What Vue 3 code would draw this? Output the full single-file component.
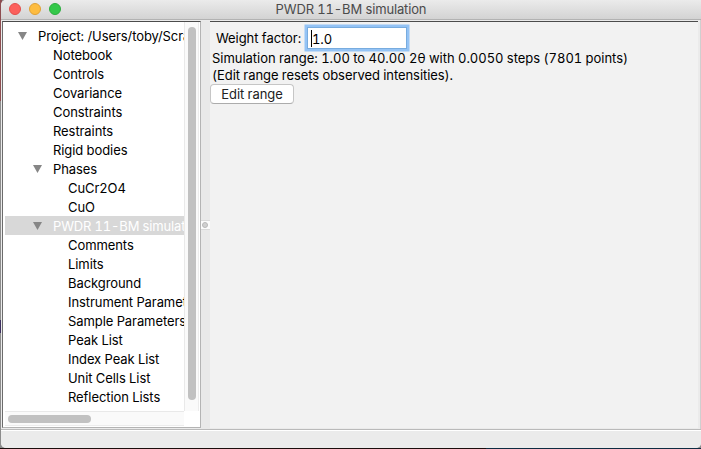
<script setup>
const rows = [
  { label: 'Project: /Users/toby/Scratch', level: 0, open: true },
  { label: 'Notebook', level: 1 },
  { label: 'Controls', level: 1 },
  { label: 'Covariance', level: 1 },
  { label: 'Constraints', level: 1 },
  { label: 'Restraints', level: 1 },
  { label: 'Rigid bodies', level: 1 },
  { label: 'Phases', level: 1, open: true },
  { label: 'CuCr2O4', level: 2 },
  { label: 'CuO', level: 2 },
  { label: 'PWDR 11-BM simulation', level: 1, open: true, selected: true },
  { label: 'Comments', level: 2 },
  { label: 'Limits', level: 2 },
  { label: 'Background', level: 2 },
  { label: 'Instrument Parameters', level: 2 },
  { label: 'Sample Parameters', level: 2 },
  { label: 'Peak List', level: 2 },
  { label: 'Index Peak List', level: 2 },
  { label: 'Unit Cells List', level: 2 },
  { label: 'Reflection Lists', level: 2 },
]
</script>

<template>
  <div class="desktop">
    <div class="window">
      <header class="titlebar">
        <div class="lights">
          <span class="light close"></span>
          <span class="light minimize"></span>
          <span class="light maximize"></span>
        </div>
        <span class="title">PWDR 11-BM simulation</span>
      </header>
      <div class="body">
        <aside class="sidebar">
          <div class="tree">
            <div
              v-for="row in rows"
              :key="row.label"
              class="row"
              :class="['level-' + row.level, { selected: row.selected }]"
            >
              <span class="toggle">
                <svg v-if="row.open" width="9" height="8" viewBox="0 0 9 8"><path d="M0 0H9L4.5 8Z" fill="#868686" /></svg>
              </span>
              <span class="label">{{ row.label }}</span>
            </div>
          </div>
          <div class="vbar"><div class="vthumb"></div></div>
          <div class="hbar"><div class="hthumb"></div></div>
          <div class="corner"></div>
        </aside>
        <div class="sash"><span class="grip"><i class="dot"></i></span></div>
        <main class="panel">
          <div class="field">
            <span class="field-label">Weight factor:</span>
            <div class="input"><span class="caret"></span><span class="value">1.0</span></div>
          </div>
          <p class="line range">Simulation range: 1.00 to 40.00 2θ with 0.0050 steps (7801 points)</p>
          <p class="line note">(Edit range resets observed intensities).</p>
          <button class="button" type="button">Edit range</button>
        </main>
      </div>
      <footer class="status"></footer>
    </div>
  </div>
</template>

<style>
body { margin: 0; overflow: hidden; }
</style>

<style scoped>
* { box-sizing: border-box; }
.desktop {
  width: 701px;
  height: 449px;
  padding: 0 0 1px 1px;
  background:
    linear-gradient(#8d4d50, #8d4d50) 0 0 / 2px 101px no-repeat,
    linear-gradient(#3d3060, #3d3060) 0 320px / 2px 13px no-repeat,
    linear-gradient(90deg, #1b0d0c 486px, #0d2b41 486px) 0 448px / 701px 1px no-repeat,
    #8c8c8c;
  font-family: Inter, "Liberation Sans", sans-serif;
  font-size: 13px;
  font-variant-numeric: tabular-nums;
  color: #000;
}
.window {
  display: flex;
  flex-direction: column;
  width: 700px;
  height: 448px;
  overflow: hidden;
  border-radius: 5px 0 5px 5px;
  background: #ebebeb;
}
.titlebar {
  display: grid;
  grid-template-columns: 1fr auto 1fr;
  flex: none;
  height: 20px;
  border-bottom: 1px solid #b2b2b2;
  background: linear-gradient(#ebebeb, #d3d3d3);
}
.lights { display: flex; gap: 8px; padding: 3px 0 0 8px; }
.light { width: 12px; height: 12px; border-radius: 50%; border: 1px solid; }
.close { background: #fc605c; border-color: #e2504c; }
.minimize { background: #fdbc40; border-color: #dfa136; }
.maximize { background: #34c84a; border-color: #2cad3e; }
.title { color: #4b4b4b; line-height: 18px; letter-spacing: -0.14px; white-space: nowrap; }
.body { display: flex; flex: none; height: 409px; padding: 1px 1px 0 1px; border-right: 1px solid #cfcfcf; }
.sidebar {
  display: grid;
  grid-template-columns: 179px 15px;
  grid-template-rows: 389px 15px;
  flex: none;
  width: 199px;
  height: 407px;
  padding-left: 2px;
  border: 1px solid #b4b4b4;
  border-top-color: #4c4c4c;
  border-left-color: #6c6c6c;
  background: #fff;
}
.tree { padding-top: 4px; overflow: hidden; }
.row { display: flex; height: 19px; line-height: 20px; white-space: nowrap; letter-spacing: -0.08px; }
.toggle { display: flex; flex: none; width: 20px; padding-top: 6px; }
.level-0 { padding-left: 13px; }
.level-1 { padding-left: 28px; }
.level-2 { padding-left: 43px; }
.selected { background: #d8d8d8; color: #fff; letter-spacing: -0.16px; }
.vbar { padding: 5px 3px 11px 3px; border-left: 1px solid #e9e9e9; border-right: 1px solid #ececec; background: #fafafa; }
.vthumb { width: 8px; height: 373px; border-radius: 4px; background: #c1c1c1; }
.hbar { padding: 3px 0 0 3px; border-top: 1px solid #e9e9e9; border-bottom: 1px solid #ececec; background: #fafafa; }
.hthumb { width: 83px; height: 8px; border-radius: 4px; background: #c1c1c1; }
.sash { flex: none; width: 9px; padding-top: 199px; background: #e9e9e9; }
.grip { display: flex; align-items: center; justify-content: center; height: 10px; padding-right: 1px; border: 1px solid #dadada; border-width: 1px 0; background: #fbfbfb; }
.dot { width: 6px; height: 6px; border-radius: 50%; border: 1px solid #b8b8b8; background: #d0d0d0; }
.panel { width: 488px; height: 407px; padding-top: 2px; border-top: 1px solid #4c4c4c; background: #f2f2f2; }
.field { display: flex; align-items: flex-start; height: 26px; padding-left: 6px; }
.field-label { width: 91px; line-height: 28px; letter-spacing: -0.06px; white-space: nowrap; }
.input {
  display: flex;
  align-items: center;
  width: 100px;
  height: 22px;
  margin-top: 3px;
  padding-left: 3px;
  border: 1px solid #78acdf;
  background: #fff;
  box-shadow: 0 0 0 2.5px #94c3f5;
}
.caret { width: 1px; height: 17px; background: #000; }
.value { padding-top: 2px; letter-spacing: -0.1px; }
.line { margin: 0; padding-left: 2px; height: 17px; line-height: 17px; white-space: nowrap; }
.range { letter-spacing: -0.035px; }
.note { letter-spacing: -0.07px; }
.button {
  display: block;
  width: 84px;
  height: 20px;
  margin: 0;
  padding: 0;
  border: 1px solid #c6c6c6;
  border-bottom-color: #acacac;
  border-radius: 4px;
  background: #fff;
  font: inherit;
  color: #222;
  line-height: 17px;
  letter-spacing: -0.05px;
}
.status { flex: none; height: 19px; border-top: 1px solid #bababa; box-shadow: inset 0 1px #fff; background: #ebebeb; }
</style>
